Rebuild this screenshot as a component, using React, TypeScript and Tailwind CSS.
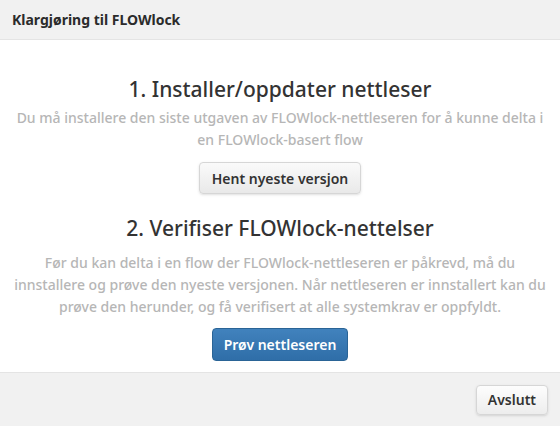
import React from "react";

const App: React.FC = () => {
  return (
    <div
      className="w-[560px] h-[426px] flex flex-col bg-white text-[#333]"
      style={{ fontFamily: '"Noto Sans", "Open Sans", sans-serif' }}
    >
      {/* Header */}
      <div className="h-[40px] flex items-center px-[12px] bg-[#f1f1f1] border-b border-[#e4e4e4]">
        <h1 className="text-[14px] font-bold text-[#2b2b2b]">Klargjøring til FLOWlock</h1>
      </div>

      {/* Body */}
      <div className="flex-1 flex flex-col items-center text-center px-[6px]">
        <h2 className="mt-[34px] text-[21px] leading-[30px] font-medium text-[#333]">
          1. Installer/oppdater nettleser
        </h2>
        <p className="mt-[3px] text-[14px] leading-[22px] font-medium text-[#b6b6b6]">
          Du må installere den siste utgaven av FLOWlock-nettleseren for å kunne delta i
          <br />
          en FLOWlock-basert flow
        </p>
        <button className="mt-[11px] h-[32px] px-[12px] rounded-[4px] border border-[#d6d6d6] bg-gradient-to-b from-[#fafafa] to-[#e9e9e9] text-[14px] font-semibold text-[#333] shadow-sm">
          Hent nyeste versjon
        </button>

        <h2 className="mt-[19px] text-[21px] leading-[30px] font-medium text-[#333]">
          2. Verifiser FLOWlock-nettelser
        </h2>
        <p className="mt-[9px] text-[14px] leading-[22px] font-medium text-[#b6b6b6]">
          Før du kan delta i en flow der FLOWlock-nettleseren er påkrevd, må du
          <br />
          innstallere og prøve den nyeste versjonen. Når nettleseren er innstallert kan du
          <br />
          prøve den herunder, og få verifisert at alle systemkrav er oppfyldt.
        </p>
        <button className="mt-[10px] h-[33px] px-[11px] rounded-[4px] border border-[#2a6496] bg-gradient-to-b from-[#4182bd] to-[#2f6ea8] text-[14px] font-semibold text-white">
          Prøv nettleseren
        </button>
      </div>

      {/* Footer */}
      <div className="h-[54px] flex items-center justify-end px-[12px] bg-[#f1f1f1] border-t border-[#e4e4e4]">
        <button className="h-[30px] px-[11px] rounded-[4px] border border-[#d6d6d6] bg-gradient-to-b from-[#fdfdfd] to-[#ededed] text-[14px] font-semibold text-[#333] shadow-sm">
          Avslutt
        </button>
      </div>
    </div>
  );
};

export default App;
